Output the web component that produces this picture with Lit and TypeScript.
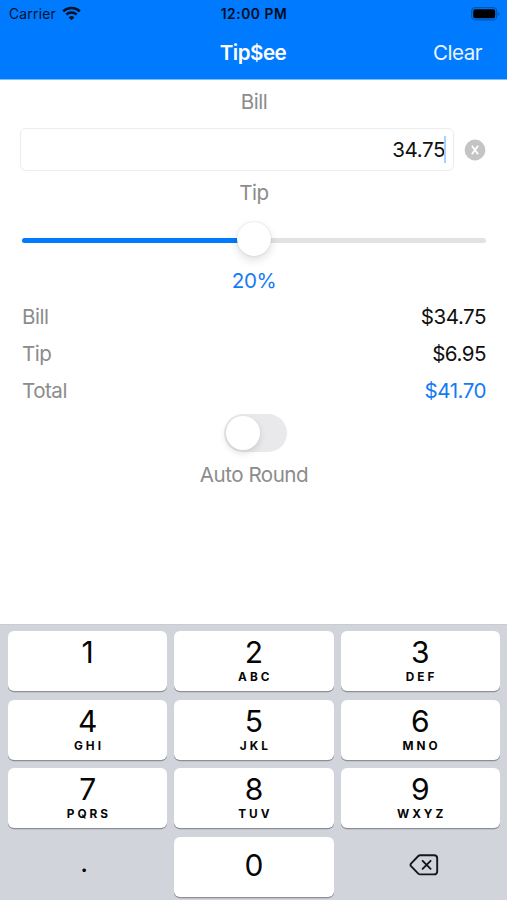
import { LitElement, html, css, nothing } from "lit";
import { customElement, property } from "lit/decorators.js";

@customElement("status-bar")
class StatusBar extends LitElement {
  static styles = css`
    :host { display: grid; grid-template-columns: 1fr auto 1fr; align-items: center; height: 28px; padding: 0 7px 0 9px; font-size: 13.8px; color: #001226; }
    .carrier { display: flex; align-items: center; gap: 6px; letter-spacing: 0.25px; }
    .carrier svg { margin-top: -2px; }
    .time { font-weight: 600; color: #000b18; font-size: 13.8px; letter-spacing: 0.55px; margin-left: -1px; }
    .battery { justify-self: end; margin-top: -1px; }
    svg { display: block; }
  `;
  render() {
    return html`
      <div class="carrier"><span>Carrier</span>
        <svg width="19" height="15" viewBox="0 0 19 15" fill="none" stroke="#001226" stroke-width="2.5">
          <path d="M1.2 5.4a11.8 11.8 0 0 1 16.6 0" /><path d="M4.3 8.7a7.4 7.4 0 0 1 10.4 0" />
          <path d="M9.5 14.2 6.7 11.4a4 4 0 0 1 5.6 0z" fill="#001226" stroke="none" />
        </svg>
      </div>
      <div class="time">12:00 PM</div>
      <svg class="battery" width="29" height="14" viewBox="0 0 29 14">
        <rect x=".7" y=".7" width="25" height="12.2" rx="3.6" fill="none" stroke="#0057b4" stroke-width="1.3" />
        <rect x="2.2" y="2.3" width="22" height="9" rx="2.2" fill="#000" />
        <path d="M27.2 5v4q1.5-.8 1.5-2t-1.5-2" fill="#0057b4" />
      </svg>`;
  }
}

@customElement("amount-row")
class AmountRow extends LitElement {
  @property() label = "";
  @property() amount = "";
  @property({ type: Boolean }) accent = false;
  static styles = css`
    :host { display: flex; justify-content: space-between; align-items: center; height: 37px; }
    .label { color: #8c8c8c; letter-spacing: -0.5px; }
    .amount { color: #111; letter-spacing: -0.5px; }
    .accent { color: #147bf5; }
  `;
  render() {
    return html`<span class="label">${this.label}</span>
      <span class="amount ${this.accent ? "accent" : ""}">${this.amount}</span>`;
  }
}

const KEYS: [string, string][] = [
  ["1", ""], ["2", "ABC"], ["3", "DEF"],
  ["4", "GHI"], ["5", "JKL"], ["6", "MNO"],
  ["7", "PQRS"], ["8", "TUV"], ["9", "WXYZ"],
  [".", ""], ["0", ""], ["delete", ""],
];

@customElement("number-pad")
class NumberPad extends LitElement {
  static styles = css`
    :host { display: grid; grid-template-columns: repeat(3, 1fr); grid-auto-rows: 60px; gap: 8.5px 7px; box-sizing: border-box; height: 276px; padding: 6px 7px 0 8px; background: #d1d4db; border-top: 1px solid #c9ccd1; color: #050505; }
    .key { display: flex; flex-direction: column; align-items: center; box-sizing: border-box; background: #fff; border-radius: 6px; box-shadow: 0 1.3px 0 #8c8f94; }
    .digit { font-size: 30px; line-height: 34px; padding-top: 4px; }
    .letters { font-size: 11.8px; font-weight: 700; line-height: 14px; letter-spacing: 3px; margin: 1px -2.6px 0 0; }
    .zero { padding-top: 7px; }
    .plain { background: none; box-shadow: none; justify-content: center; }
    .point { font-size: 27px; line-height: 34px; padding: 0 7px 7px 0; }
    svg { display: block; margin: 0 0 4px 7px; }
  `;
  private key([digit, letters]: [string, string]) {
    if (digit === ".") return html`<div class="key plain"><span class="point">.</span></div>`;
    if (digit === "delete")
      return html`<div class="key plain">
        <svg width="30" height="22" viewBox="0 0 30 22" fill="none" stroke="#15171a" stroke-width="1.9" stroke-linecap="round" stroke-linejoin="round">
          <path d="M11.2 1.2H25Q28.2 1.2 28.2 4.4V17.2Q28.2 20.4 25 20.4H11.2Q10.1 20.4 9.3 19.6L2 12.1Q1 10.9 2 9.6L9.3 2Q10.1 1.2 11.2 1.2Z" />
          <path d="M13.6 6.8l8 8M21.6 6.8l-8 8" />
        </svg></div>`;
    return html`<div class="key ${digit === "0" ? "zero" : ""}">
      <span class="digit">${digit}</span>
      ${letters ? html`<span class="letters">${letters}</span>` : nothing}
    </div>`;
  }
  render() {
    return KEYS.map((k) => this.key(k));
  }
}

@customElement("app-root")
class AppRoot extends LitElement {
  @property({ type: Number }) position = 50;
  static styles = css`
    :host { display: flex; flex-direction: column; height: 900px; overflow: hidden; background: #fff; font-family: Inter, "Liberation Sans", sans-serif; font-size: 20.6px; line-height: 25px; }
    .header { height: 80px; background: #007aff; color: #fff; border-bottom: 1px solid #7fbcff; box-sizing: border-box; }
    .nav { display: grid; grid-template-columns: 1fr auto 1fr; align-items: center; height: 48px; padding: 0 25px 0 24px; }
    .title { grid-column: 2; font-weight: 600; letter-spacing: -0.5px; }
    .clear { justify-self: end; color: #e9f4ff; letter-spacing: -0.5px; }
    .form { flex: 1; padding: 9px 21px 0 22px; }
    .caption { text-align: center; color: #8c8c8c; letter-spacing: -0.5px; }
    .entry { display: flex; align-items: center; gap: 10px; margin: 14px 0 9px -2px; }
    .field { flex: 1; display: flex; justify-content: flex-end; align-items: center; height: 43px; box-sizing: border-box; border: 1px solid #ececec; border-radius: 6px; padding-right: 7px; color: #111; letter-spacing: -0.45px; }
    .caret { width: 2px; height: 27px; background: #a9cffb; margin-left: -1px; }
    .wipe { display: block; }
    .slider { display: grid; align-items: center; height: 36px; margin: 16px 0 11px; }
    .slider > * { grid-area: 1 / 1; }
    .track { height: 5px; border-radius: 3px; background: #e2e2e3; overflow: hidden; margin-top: 2px; }
    .fill { height: 100%; background: #007aff; }
    .knob { justify-self: center; width: 34px; height: 34px; border-radius: 50%; background: #fff; box-shadow: 0 4px 10px rgba(0, 0, 0, 0.13), 0 0 1.5px rgba(0, 0, 0, 0.18); }
    .percent { text-align: center; color: #147bf5; margin-bottom: 5px; letter-spacing: -0.5px; }
    .switch { width: 63px; height: 38px; border-radius: 19px; background: #e9e9eb; margin: 5px auto 10px; padding: 2px; box-sizing: border-box; position: relative; left: 1px; }
    .thumb { width: 34px; height: 34px; border-radius: 50%; background: #fff; box-shadow: 0 3px 7px rgba(0, 0, 0, 0.13); }
  `;
  render() {
    return html`
      <div class="header">
        <status-bar></status-bar>
        <div class="nav"><span class="title">Tip$ee</span><span class="clear">Clear</span></div>
      </div>
      <div class="form">
        <div class="caption">Bill</div>
        <div class="entry">
          <div class="field"><span>34.75</span><span class="caret"></span></div>
          <svg class="wipe" width="22" height="22" viewBox="0 0 22 22">
            <circle cx="11" cy="11" r="10.4" fill="#c4c4c4" />
            <path d="M7.9 6.8l6.2 8.4M14.1 6.8l-6.2 8.4" stroke="#fff" stroke-width="1.8" />
          </svg>
        </div>
        <div class="caption">Tip</div>
        <div class="slider">
          <div class="track"><div class="fill" style="width:${this.position}%"></div></div>
          <div class="knob"></div>
        </div>
        <div class="percent">20%</div>
        <amount-row label="Bill" amount="$34.75"></amount-row>
        <amount-row label="Tip" amount="$6.95"></amount-row>
        <amount-row label="Total" amount="$41.70" accent></amount-row>
        <div class="switch"><div class="thumb"></div></div>
        <div class="caption">Auto Round</div>
      </div>
      <number-pad></number-pad>`;
  }
}
